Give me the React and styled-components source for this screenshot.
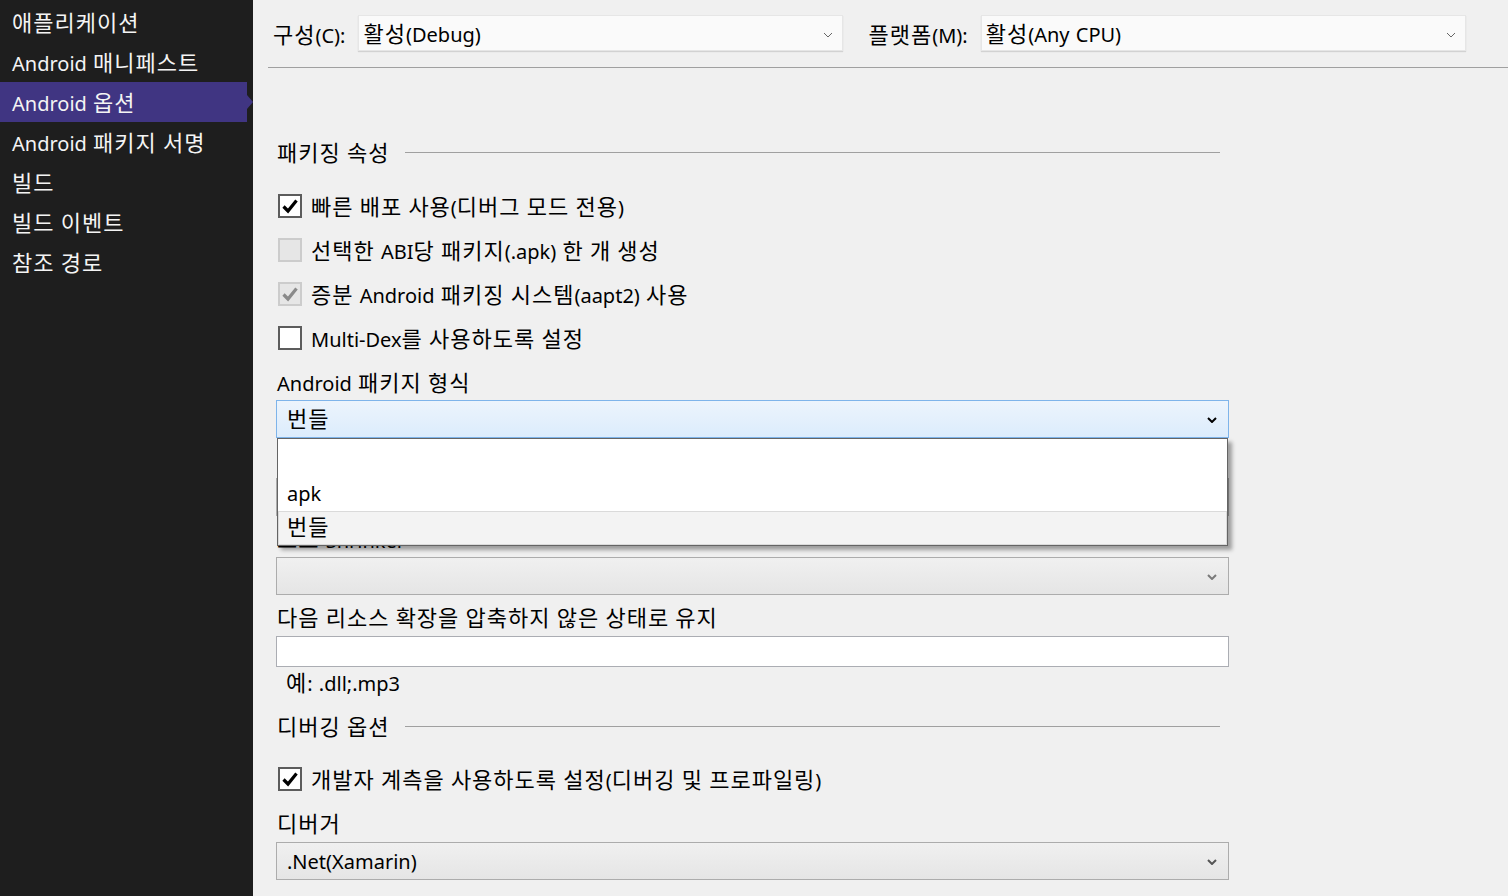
import React from 'react'
import styled, { createGlobalStyle } from 'styled-components';

const GlobalStyle = createGlobalStyle`
    html, body {
        margin: 0;
        padding: 0;
        background: #f0f0f0;
    }
    body {
        font-family: "Noto Sans", "Noto Sans CJK KR", sans-serif;
        font-size: 20px;
        color: #000;
        word-spacing: 1px;
    }
    * {
        box-sizing: border-box;
    }
`

// Hangul runs are set a bit larger to match the look of the original UI font
const Hangul = styled.span`
    font-family: "Noto Sans CJK KR", sans-serif;
    font-size: 22px;
    line-height: 1;
    letter-spacing: 1px;
`

function K({ children }) {
    const parts = String(children).split(/([\uac00-\ud7a3]+)/)
    return (
        <span>
            {parts.map((p, i) =>
                /[\uac00-\ud7a3]/.test(p) ? <Hangul key={i}>{p}</Hangul> : p
            )}
        </span>
    )
}

const Page = styled.div`
    display: flex;
    width: 1508px;
    height: 896px;
    overflow: hidden;
`

const Sidebar = styled.div`
    width: 253px;
    flex-shrink: 0;
    background: #1e1e1e;
    padding-top: 2px;
`

const NavItem = styled.div`
    position: relative;
    height: 40px;
    line-height: 36px;
    padding: 4px 0 0 12px;
    margin-right: 6px;
    color: #f4f4f4;
    white-space: nowrap;
    background: ${p => (p.$active ? '#403582' : 'transparent')};

    &::after {
        content: '';
        display: ${p => (p.$active ? 'block' : 'none')};
        position: absolute;
        right: -6px;
        top: 13px;
        border-top: 7px solid transparent;
        border-bottom: 7px solid transparent;
        border-left: 6px solid #403582;
    }
`

const Main = styled.div`
    flex: 1;
    background: #f0f0f0;
    padding-left: 15px;
`

const Toolbar = styled.div`
    display: flex;
    align-items: flex-start;
    height: 68px;
    padding: 15px 0 0 5px;
    border-bottom: 1px solid #a0a0a0;
`

const ToolbarLabel = styled.span`
    height: 36px;
    line-height: 41px;
    white-space: nowrap;
    margin-left: ${p => p.$gap || 0}px;
    margin-right: 13px;
`

const TopCombo = styled.div`
    display: flex;
    align-items: center;
    justify-content: space-between;
    width: 485px;
    height: 36px;
    line-height: 32px;
    padding: 3px 9px 0 4px;
    background: #fafafa;
    border: 1px solid #e6e6e6;
    box-shadow: 0 1px 1px rgba(0, 0, 0, 0.12);
`

const Form = styled.div`
    width: 953px;
    margin-left: 8px;
    padding-top: 69px;
`

const SectionHeader = styled.div`
    display: flex;
    align-items: center;
    height: 30px;
    line-height: 30px;
    padding-left: 1px;
    margin-top: ${p => p.$mt || 0}px;

    &::after {
        content: '';
        flex: 1;
        height: 1px;
        background: #a0a0a0;
        margin: 0 9px 0 16px;
    }
`

const HeaderText = styled.span`
    padding-top: 4px;
`

const CheckRow = styled.div`
    display: flex;
    align-items: center;
    height: 44px;
    line-height: 40px;
    padding-left: 2px;
    margin-top: ${p => p.$mt || 0}px;
    color: #000;
`

const CheckText = styled.span`
    padding-top: 4px;
`

const Box = styled.div`
    width: 24px;
    height: 24px;
    margin-right: 9px;
    display: flex;
    align-items: center;
    justify-content: center;
    background: ${p => (p.$disabled ? '#e6e6e6' : '#fff')};
    border: 2px solid ${p => (p.$disabled ? '#cccccc' : '#5c5c5c')};
`

const FieldLabel = styled.div`
    height: 30px;
    line-height: 31px;
    padding-left: 1px;
    margin-top: ${p => p.$mt || 0}px;
    white-space: nowrap;
`

const ComboWrap = styled.div`
    position: relative;
    margin-top: ${p => p.$mt || 0}px;
`

const Combo = styled.div`
    display: flex;
    align-items: center;
    justify-content: space-between;
    height: 38px;
    line-height: 34px;
    padding: 2px 11px 0 10px;
    border: 1px solid ${p => (p.$focus ? '#7eb4ea' : '#acacac')};
    background: ${p =>
        p.$focus
            ? 'linear-gradient(#ecf4fc, #dcecfc)'
            : 'linear-gradient(#f0f0f0, #e5e5e5)'};
`

const DropList = styled.div`
    position: absolute;
    z-index: 5;
    top: 100%;
    left: 1px;
    right: 1px;
    background: #fff;
    border: 1px solid #646464;
    box-shadow: 4px 4px 4px rgba(0, 0, 0, 0.35);
`

const DropItem = styled.div`
    height: ${p => p.$h}px;
    line-height: ${p => p.$h - 2}px;
    padding-left: 8px;
    display: flex;
    align-items: flex-end;
    background: ${p => (p.$selected ? '#f3f3f3' : 'transparent')};
    border: 1px solid ${p => (p.$selected ? '#dadada' : 'transparent')};
`

const TextInput = styled.div`
    height: 31px;
    margin-top: 3px;
    background: #fff;
    border: 1px solid #abadb3;
`

const Hint = styled.div`
    height: 26px;
    line-height: 26px;
    margin-top: 3px;
    padding-left: 10px;
`

function Chevron({ color = '#666', weight = 1, w = 10, h = 6 }) {
    return (
        <svg width={w} height={h} viewBox="0 0 10 6" style={{ display: 'block' }}>
            <path d="M1 1 L5 5 L9 1" fill="none" stroke={color} strokeWidth={weight} />
        </svg>
    )
}

function Check({ color = '#000' }) {
    return (
        <svg width="18" height="18" viewBox="0 0 18 18" style={{ display: 'block' }}>
            <path d="M2.5 9.5 L7 14 L15.5 3.5" fill="none" stroke={color} strokeWidth="3.2" />
        </svg>
    )
}

function CheckItem({ checked, disabled, mt, children }) {
    return (
        <CheckRow $mt={mt}>
            <Box $disabled={disabled}>
                {checked && <Check color={disabled ? '#8a8a8a' : '#000'} />}
            </Box>
            <CheckText><K>{children}</K></CheckText>
        </CheckRow>
    )
}

const navItems = [
    '애플리케이션',
    'Android 매니페스트',
    'Android 옵션',
    'Android 패키지 서명',
    '빌드',
    '빌드 이벤트',
    '참조 경로',
]

function App() {
    return (
        <Page>
            <GlobalStyle />
            <Sidebar>
                {navItems.map(item => (
                    <NavItem key={item} $active={item === 'Android 옵션'}><K>{item}</K></NavItem>
                ))}
            </Sidebar>
            <Main>
                <Toolbar>
                    <ToolbarLabel><K>구성(C):</K></ToolbarLabel>
                    <TopCombo>
                        <K>활성(Debug)</K>
                        <Chevron />
                    </TopCombo>
                    <ToolbarLabel $gap={25}><K>플랫폼(M):</K></ToolbarLabel>
                    <TopCombo>
                        <K>활성(Any CPU)</K>
                        <Chevron />
                    </TopCombo>
                </Toolbar>
                <Form>
                    <SectionHeader><HeaderText><K>패키징 속성</K></HeaderText></SectionHeader>
                    <CheckItem checked mt={17}>빠른 배포 사용(디버그 모드 전용)</CheckItem>
                    <CheckItem disabled>선택한 ABI당 패키지(.apk) 한 개 생성</CheckItem>
                    <CheckItem checked disabled>증분 Android 패키징 시스템(aapt2) 사용</CheckItem>
                    <CheckItem>Multi-Dex를 사용하도록 설정</CheckItem>

                    <FieldLabel $mt={8}><K>Android 패키지 형식</K></FieldLabel>
                    <ComboWrap $mt={2}>
                        <Combo $focus>
                            <K>번들</K>
                            <Chevron color="#000" weight={2} w={10} h={6} />
                        </Combo>
                        <DropList>
                            <DropItem $h={37} />
                            <DropItem $h={35}>apk</DropItem>
                            <DropItem $h={34} $selected><K>번들</K></DropItem>
                        </DropList>
                    </ComboWrap>

                    <FieldLabel $mt={8}><K>Dex 컴파일러</K></FieldLabel>
                    <ComboWrap $mt={2}>
                        <Combo>
                            <span>d8</span>
                            <Chevron color="#555" weight={2} />
                        </Combo>
                    </ComboWrap>

                    <FieldLabel $mt={9}><K>코드 Shrinker</K></FieldLabel>
                    <ComboWrap $mt={2}>
                        <Combo>
                            <span></span>
                            <Chevron color="#7a7a7a" weight={2} />
                        </Combo>
                    </ComboWrap>

                    <FieldLabel $mt={8}><K>다음 리소스 확장을 압축하지 않은 상태로 유지</K></FieldLabel>
                    <TextInput />
                    <Hint><K>예: .dll;.mp3</K></Hint>

                    <SectionHeader $mt={15}><HeaderText><K>디버깅 옵션</K></HeaderText></SectionHeader>
                    <CheckItem checked mt={16}>개발자 계측을 사용하도록 설정(디버깅 및 프로파일링)</CheckItem>

                    <FieldLabel $mt={8}><K>디버거</K></FieldLabel>
                    <ComboWrap $mt={3}>
                        <Combo>
                            <span>.Net(Xamarin)</span>
                            <Chevron color="#555" weight={2} />
                        </Combo>
                    </ComboWrap>
                </Form>
            </Main>
        </Page>
    )
}

export default App
